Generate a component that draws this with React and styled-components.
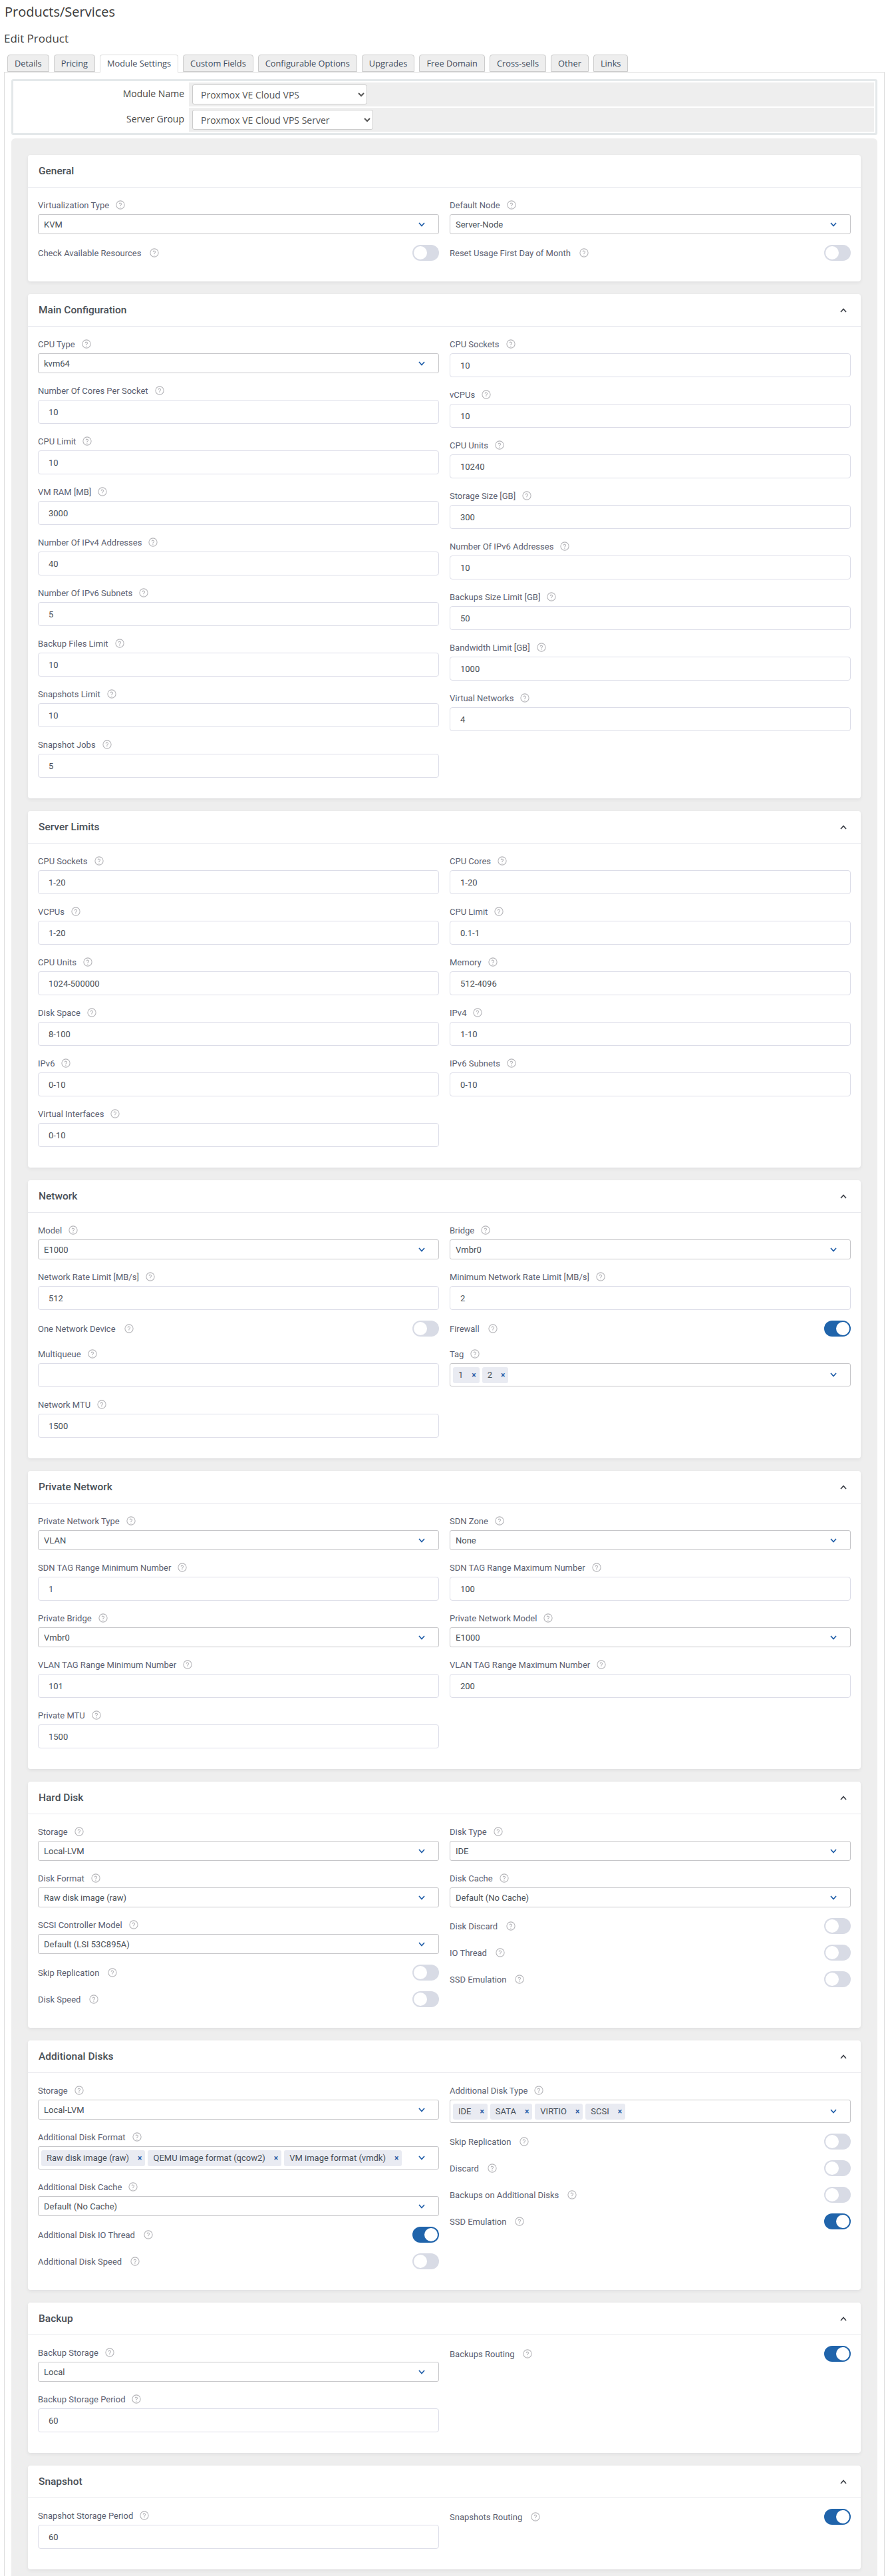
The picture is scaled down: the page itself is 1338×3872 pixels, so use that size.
import React from "react";
import styled, { createGlobalStyle } from "styled-components";

const GlobalStyle = createGlobalStyle`
  html, body {
    margin: 0;
    padding: 0;
    background: #fff;
  }
  * {
    box-sizing: border-box;
  }
`;

const Page = styled.div`
  height: 3872px;
  overflow: hidden;
  padding: 6px 8px 0 6px;
  font-family: "Open Sans", sans-serif;
  color: #333;
`;

const PageTitle = styled.h1`
  margin: 0;
  padding-left: 1px;
  font-size: 20px;
  line-height: 24px;
  font-weight: 400;
  color: #3a3a3a;
`;

const SubTitle = styled.h2`
  margin: 16px 0 0;
  font-size: 17px;
  line-height: 24px;
  font-weight: 400;
  color: #444;
`;

const Tabs = styled.ul`
  list-style: none;
  display: flex;
  gap: 7px;
  height: 26px;
  margin: 12px 0 0;
  padding: 0 0 0 5px;
  position: relative;
  z-index: 1;
`;

const Tab = styled.li`
  height: ${(p) => (p.$active ? "27px" : "26px")};
  padding: 0 10px;
  font-size: 12.8px;
  line-height: 25px;
  color: #3d4b5c;
  background: ${(p) => (p.$active ? "#fff" : "#eee")};
  border: 1px solid #ccc;
  border-color: ${(p) => (p.$active ? "#ddd" : "#ccc")};
  border-bottom: ${(p) => (p.$active ? "0" : "1px solid #ccc")};
  border-radius: 4px 4px 0 0;
`;

const Panel = styled.div`
  border: 1px solid #ddd;
  border-bottom: 0;
  padding: 10px 10px 0;
`;

const ModuleTable = styled.div`
  border: 3px solid #e4e8ea;
  border-radius: 3px;
  padding: 2px;
  display: flex;
  flex-direction: column;
  gap: 2px;
  background: #fff;
`;

const ModuleRow = styled.div`
  display: grid;
  grid-template-columns: 260px 1fr;
  gap: 2px;
  height: 36px;
`;

const ModuleLabel = styled.div`
  text-align: right;
  padding-right: 5px;
  font-size: 14px;
  line-height: 34px;
  color: #444;
`;

const ModuleCell = styled.div`
  background: #eee;
  padding: 3px 5px;
`;

const NativeSelect = styled.select`
  display: block;
  width: ${(p) => p.$width}px;
  height: 30px;
  padding: 0 8px;
  font-family: "Open Sans", sans-serif;
  font-size: 14px;
  color: #555;
  background: #fff;
  border: 1px solid #ccc;
  border-radius: 3px;
`;

const Gray = styled.div`
  margin-top: 5px;
  background: #eee;
  border-radius: 6px 6px 0 0;
  padding: 25px 25px 19px;
  display: flex;
  flex-direction: column;
  gap: 19px;
`;

const Card = styled.section`
  background: #fff;
  border-radius: 4px;
  box-shadow: 0 2px 5px rgba(60, 60, 80, 0.08);
`;

const CardHead = styled.header`
  height: 49px;
  padding: 0 21px 0 16px;
  display: flex;
  align-items: center;
  justify-content: space-between;
  border-bottom: 1px solid #e8e9ee;
`;

const CardTitle = styled.h3`
  margin: 0;
  font-family: Roboto, sans-serif;
  font-size: 15.5px;
  font-weight: 500;
  color: #495057;
`;

const CardBody = styled.div`
  display: grid;
  grid-template-columns: 1fr 1fr;
  gap: 16px;
  padding: 16px 15px 15px;
`;

const Column = styled.div`
  display: flex;
  flex-direction: column;
  gap: 16px;
  padding-bottom: 16px;
`;

const LabelRow = styled.div`
  display: flex;
  align-items: center;
  gap: ${(p) => (p.$wide ? "13px" : "10px")};
  height: 20px;
  margin-bottom: ${(p) => (p.$wide ? "0" : "4px")};
  font-family: Roboto, sans-serif;
  font-size: 13px;
  color: #5b6070;
`;

const SwitchRow = styled.div`
  display: flex;
  align-items: center;
  justify-content: space-between;
  height: 24px;
`;

const HelpSvg = styled.svg`
  width: 14px;
  height: 14px;
  flex: none;
  fill: none;
  stroke: #b4b4b8;
  stroke-width: 1.8;
  stroke-linecap: round;
  stroke-linejoin: round;
`;

const SelectBox = styled.div`
  display: flex;
  align-items: center;
  justify-content: space-between;
  min-height: ${(p) => (p.$multi ? "35px" : "30px")};
  padding: ${(p) => (p.$multi ? "0 20px 0 4px" : "0 20px 0 8px")};
  font-family: Roboto, sans-serif;
  font-size: 13px;
  color: #495057;
  background: #fff;
  border: 1px solid #c6c6c9;
  border-radius: 3px;
`;

const Chips = styled.div`
  display: flex;
  gap: 4px;
`;

const Chip = styled.span`
  display: inline-flex;
  align-items: center;
  gap: 13px;
  height: 24px;
  padding: 0 5px 0 8px;
  background: #e9ebf2;
  border-radius: 3px;
  white-space: nowrap;
`;

const ChipClose = styled.span`
  font-size: 12px;
  font-weight: 700;
  line-height: 1;
  color: #2a5ea8;
`;

const ArrowSvg = styled.svg`
  width: 10px;
  height: 7px;
  flex: none;
  fill: none;
  stroke: ${(p) => p.$color};
  stroke-width: 1.7;
`;

const TextInput = styled.input`
  display: block;
  width: 100%;
  height: 36px;
  padding: 0 15px;
  font-family: Roboto, sans-serif;
  font-size: 13px;
  color: #495057;
  background: #fff;
  border: 1px solid #dcdde8;
  border-radius: 4px;
  outline: none;
`;

const Track = styled.span`
  display: inline-block;
  position: relative;
  width: 40px;
  height: 24px;
  flex: none;
  border-radius: 12px;
  background: ${(p) => (p.$on ? "#2064ab" : "#d8dbe5")};
`;

const Knob = styled.span`
  position: absolute;
  top: 2px;
  left: ${(p) => (p.$on ? "18px" : "2px")};
  width: 20px;
  height: 20px;
  border-radius: 50%;
  background: #fff;
`;

const Help = () => (
  <HelpSvg viewBox="0 0 24 24">
    <circle cx="12" cy="12" r="10.5" />
    <path d="M9 9a3 3 0 0 1 5.8 1c0 2-3 2.6-3 4.4" />
    <path d="M11.8 17.8h.01" />
  </HelpSvg>
);

const Arrow = ({ up }) => (
  <ArrowSvg viewBox="0 0 10 7" $color={up ? "#3c4048" : "#1f5da8"}>
    <path d={up ? "M1 6l4-4.5L9 6" : "M1 1l4 4.5L9 1"} />
  </ArrowSvg>
);

const sel = (label, value) => ({ type: "select", label, value });
const inp = (label, value = "") => ({ type: "input", label, value });
const tog = (label, on = false) => ({ type: "switch", label, on });
const multi = (label, chips) => ({ type: "multi", label, chips });

const sections = [
  {
    title: "General",
    noArrow: true,
    left: [sel("Virtualization Type", "KVM"), tog("Check Available Resources")],
    right: [sel("Default Node", "Server-Node"), tog("Reset Usage First Day of Month")],
  },
  {
    title: "Main Configuration",
    left: [
      sel("CPU Type", "kvm64"),
      inp("Number Of Cores Per Socket", "10"),
      inp("CPU Limit", "10"),
      inp("VM RAM [MB]", "3000"),
      inp("Number Of IPv4 Addresses", "40"),
      inp("Number Of IPv6 Subnets", "5"),
      inp("Backup Files Limit", "10"),
      inp("Snapshots Limit", "10"),
      inp("Snapshot Jobs", "5"),
    ],
    right: [
      inp("CPU Sockets", "10"),
      inp("vCPUs", "10"),
      inp("CPU Units", "10240"),
      inp("Storage Size [GB]", "300"),
      inp("Number Of IPv6 Addresses", "10"),
      inp("Backups Size Limit [GB]", "50"),
      inp("Bandwidth Limit [GB]", "1000"),
      inp("Virtual Networks", "4"),
    ],
  },
  {
    title: "Server Limits",
    left: [
      inp("CPU Sockets", "1-20"),
      inp("VCPUs", "1-20"),
      inp("CPU Units", "1024-500000"),
      inp("Disk Space", "8-100"),
      inp("IPv6", "0-10"),
      inp("Virtual Interfaces", "0-10"),
    ],
    right: [
      inp("CPU Cores", "1-20"),
      inp("CPU Limit", "0.1-1"),
      inp("Memory", "512-4096"),
      inp("IPv4", "1-10"),
      inp("IPv6 Subnets", "0-10"),
    ],
  },
  {
    title: "Network",
    left: [
      sel("Model", "E1000"),
      inp("Network Rate Limit [MB/s]", "512"),
      tog("One Network Device"),
      inp("Multiqueue"),
      inp("Network MTU", "1500"),
    ],
    right: [
      sel("Bridge", "Vmbr0"),
      inp("Minimum Network Rate Limit [MB/s]", "2"),
      tog("Firewall", true),
      multi("Tag", ["1", "2"]),
    ],
  },
  {
    title: "Private Network",
    left: [
      sel("Private Network Type", "VLAN"),
      inp("SDN TAG Range Minimum Number", "1"),
      sel("Private Bridge", "Vmbr0"),
      inp("VLAN TAG Range Minimum Number", "101"),
      inp("Private MTU", "1500"),
    ],
    right: [
      sel("SDN Zone", "None"),
      inp("SDN TAG Range Maximum Number", "100"),
      sel("Private Network Model", "E1000"),
      inp("VLAN TAG Range Maximum Number", "200"),
    ],
  },
  {
    title: "Hard Disk",
    left: [
      sel("Storage", "Local-LVM"),
      sel("Disk Format", "Raw disk image (raw)"),
      sel("SCSI Controller Model", "Default (LSI 53C895A)"),
      tog("Skip Replication"),
      tog("Disk Speed"),
    ],
    right: [
      sel("Disk Type", "IDE"),
      sel("Disk Cache", "Default (No Cache)"),
      tog("Disk Discard"),
      tog("IO Thread"),
      tog("SSD Emulation"),
    ],
  },
  {
    title: "Additional Disks",
    left: [
      sel("Storage", "Local-LVM"),
      multi("Additional Disk Format", [
        "Raw disk image (raw)",
        "QEMU image format (qcow2)",
        "VM image format (vmdk)",
      ]),
      sel("Additional Disk Cache", "Default (No Cache)"),
      tog("Additional Disk IO Thread", true),
      tog("Additional Disk Speed"),
    ],
    right: [
      multi("Additional Disk Type", ["IDE", "SATA", "VIRTIO", "SCSI"]),
      tog("Skip Replication"),
      tog("Discard"),
      tog("Backups on Additional Disks"),
      tog("SSD Emulation", true),
    ],
  },
  {
    title: "Backup",
    left: [sel("Backup Storage", "Local"), inp("Backup Storage Period", "60")],
    right: [tog("Backups Routing", true)],
  },
  {
    title: "Snapshot",
    left: [inp("Snapshot Storage Period", "60")],
    right: [tog("Snapshots Routing", true)],
  },
];

const tabs = [
  "Details",
  "Pricing",
  "Module Settings",
  "Custom Fields",
  "Configurable Options",
  "Upgrades",
  "Free Domain",
  "Cross-sells",
  "Other",
  "Links",
];

const Field = ({ field }) => {
  if (field.type === "switch") {
    return (
      <SwitchRow>
        <LabelRow $wide>
          {field.label}
          <Help />
        </LabelRow>
        <Track $on={field.on}>
          <Knob $on={field.on} />
        </Track>
      </SwitchRow>
    );
  }

  return (
    <div>
      <LabelRow>
        {field.label}
        <Help />
      </LabelRow>
      {field.type === "input" && <TextInput readOnly value={field.value} />}
      {field.type === "select" && (
        <SelectBox>
          {field.value}
          <Arrow />
        </SelectBox>
      )}
      {field.type === "multi" && (
        <SelectBox $multi>
          <Chips>
            {field.chips.map((chip) => (
              <Chip key={chip}>
                {chip}
                <ChipClose>×</ChipClose>
              </Chip>
            ))}
          </Chips>
          <Arrow />
        </SelectBox>
      )}
    </div>
  );
};

const Section = ({ section }) => (
  <Card>
    <CardHead>
      <CardTitle>{section.title}</CardTitle>
      {!section.noArrow && <Arrow up />}
    </CardHead>
    <CardBody>
      <Column>
        {section.left.map((field) => (
          <Field key={field.label} field={field} />
        ))}
      </Column>
      <Column>
        {section.right.map((field) => (
          <Field key={field.label} field={field} />
        ))}
      </Column>
    </CardBody>
  </Card>
);

const App = () => (
  <Page>
    <GlobalStyle />
    <PageTitle>Products/Services</PageTitle>
    <SubTitle>Edit Product</SubTitle>
    <Tabs>
      {tabs.map((tab) => (
        <Tab key={tab} $active={tab === "Module Settings"}>
          {tab}
        </Tab>
      ))}
    </Tabs>
    <Panel>
      <ModuleTable>
        <ModuleRow>
          <ModuleLabel>Module Name</ModuleLabel>
          <ModuleCell>
            <NativeSelect $width={263} defaultValue="Proxmox VE Cloud VPS">
              <option>Proxmox VE Cloud VPS</option>
            </NativeSelect>
          </ModuleCell>
        </ModuleRow>
        <ModuleRow>
          <ModuleLabel>Server Group</ModuleLabel>
          <ModuleCell>
            <NativeSelect $width={272} defaultValue="Proxmox VE Cloud VPS Server">
              <option>Proxmox VE Cloud VPS Server</option>
            </NativeSelect>
          </ModuleCell>
        </ModuleRow>
      </ModuleTable>
      <Gray>
        {sections.map((section) => (
          <Section key={section.title} section={section} />
        ))}
      </Gray>
    </Panel>
  </Page>
);

export default App;
